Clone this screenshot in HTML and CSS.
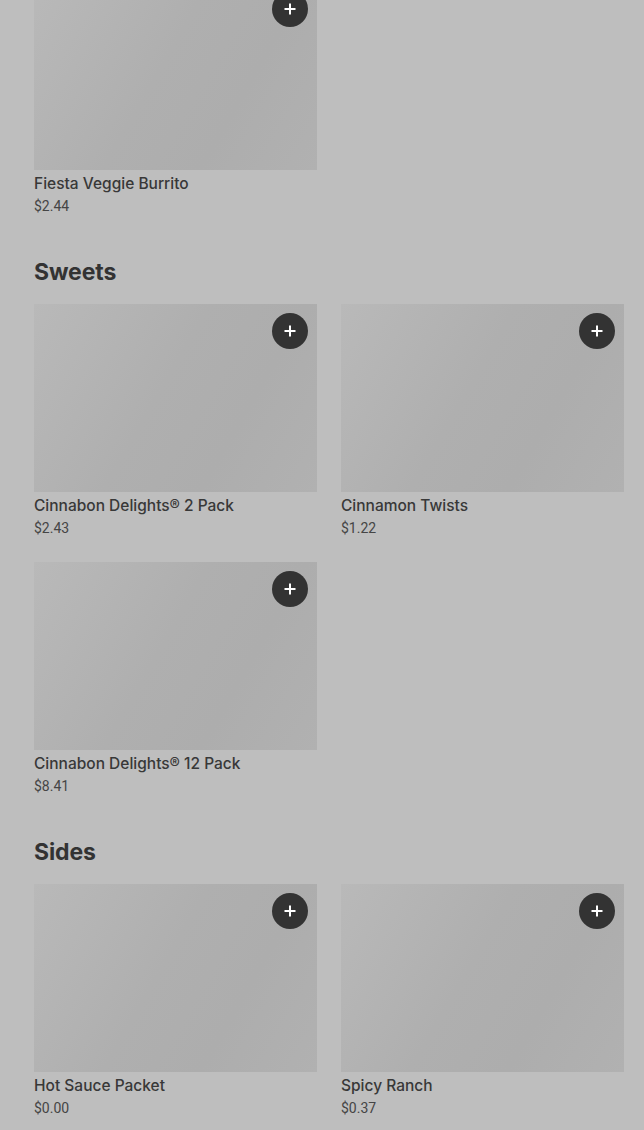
FILE: index.html
```html
<!DOCTYPE html>
<html>
<head>
<meta charset="utf-8">
<link rel="stylesheet" href="styles.css">
</head>
<body>
<main class="menu">
  <section class="section first">
    <div class="grid">
      <div class="card">
        <div class="thumb"><button class="add"><svg viewBox="0 0 16 16" width="16" height="16"><path d="M8 2.5v11M2.5 8h11" stroke="#fff" stroke-width="2"/></svg></button></div>
        <div class="name">Fiesta Veggie Burrito</div>
        <div class="price">$2.44</div>
      </div>
    </div>
  </section>
  <section class="section">
    <h2 class="title">Sweets</h2>
    <div class="grid">
      <div class="card">
        <div class="thumb"><button class="add"><svg viewBox="0 0 16 16" width="16" height="16"><path d="M8 2.5v11M2.5 8h11" stroke="#fff" stroke-width="2"/></svg></button></div>
        <div class="name">Cinnabon Delights® 2 Pack</div>
        <div class="price">$2.43</div>
      </div>
      <div class="card">
        <div class="thumb"><button class="add"><svg viewBox="0 0 16 16" width="16" height="16"><path d="M8 2.5v11M2.5 8h11" stroke="#fff" stroke-width="2"/></svg></button></div>
        <div class="name">Cinnamon Twists</div>
        <div class="price">$1.22</div>
      </div>
      <div class="card">
        <div class="thumb"><button class="add"><svg viewBox="0 0 16 16" width="16" height="16"><path d="M8 2.5v11M2.5 8h11" stroke="#fff" stroke-width="2"/></svg></button></div>
        <div class="name">Cinnabon Delights® 12 Pack</div>
        <div class="price">$8.41</div>
      </div>
    </div>
  </section>
  <section class="section">
    <h2 class="title">Sides</h2>
    <div class="grid">
      <div class="card">
        <div class="thumb"><button class="add"><svg viewBox="0 0 16 16" width="16" height="16"><path d="M8 2.5v11M2.5 8h11" stroke="#fff" stroke-width="2"/></svg></button></div>
        <div class="name">Hot Sauce Packet</div>
        <div class="price">$0.00</div>
      </div>
      <div class="card">
        <div class="thumb"><button class="add"><svg viewBox="0 0 16 16" width="16" height="16"><path d="M8 2.5v11M2.5 8h11" stroke="#fff" stroke-width="2"/></svg></button></div>
        <div class="name">Spicy Ranch</div>
        <div class="price">$0.37</div>
      </div>
    </div>
  </section>
</main>
</body>
</html>
```
FILE: styles.css
```css
html, body {
  margin: 0;
  padding: 0;
  background: #bebebe;
  overflow: hidden;
}
body {
  font-family: "Inter", "Roboto", "Liberation Sans", sans-serif;
  color: #333333;
}
.menu {
  padding: 0 20px 0 34px;
}
.section {
  margin-top: 40px;
}
.section.first {
  margin-top: -18px;
}
.title {
  margin: 0 0 16px;
  font-size: 23px;
  line-height: 32px;
  font-weight: 700;
  color: #333333;
  letter-spacing: -0.1px;
}
.grid {
  display: grid;
  grid-template-columns: 283px 283px;
  column-gap: 24px;
  row-gap: 24px;
}
.thumb {
  position: relative;
  height: 188px;
  background: linear-gradient(120deg, #b9b9b9 0%, #afafaf 45%, #adadad 70%, #b1b1b1 100%);
}
.add {
  position: absolute;
  top: 9px;
  right: 9px;
  width: 36px;
  height: 36px;
  border-radius: 50%;
  border: none;
  padding: 0;
  background: #333333;
  display: flex;
  align-items: center;
  justify-content: center;
}
.add svg {
  display: block;
}
.name {
  margin-top: 4px;
  font-size: 15.5px;
  line-height: 20px;
  font-weight: 500;
  color: #383838;
}
.price {
  margin-top: 2px;
  font-family: "Roboto", "Liberation Sans", sans-serif;
  font-size: 14px;
  line-height: 20px;
  color: #454545;
}
```
